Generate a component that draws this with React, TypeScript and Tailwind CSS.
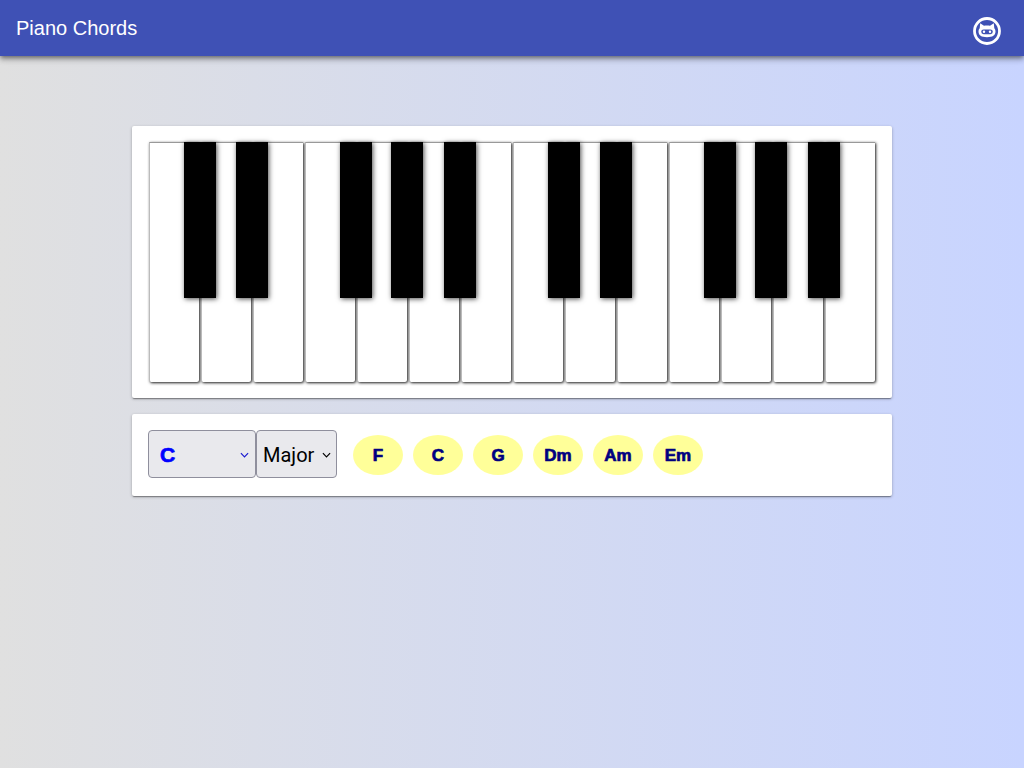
const whiteCount = Array.from({ length: 14 }, (_, i) => i);
const blackLefts = [36, 88, 192, 243, 296, 400, 452, 556, 607, 660];
const chords = ["F", "C", "G", "Dm", "Am", "Em"];

function Chevron({ className }: { className: string }) {
  return (
    <svg viewBox="0 0 10 6" className={className} fill="none" stroke="currentColor" strokeWidth="1.3">
      <path d="M1 1l4 4 4-4" />
    </svg>
  );
}

function GithubCat() {
  return (
    <svg viewBox="0 0 30 30" className="w-[30px] h-[30px] mt-[6px]">
      <circle cx="15" cy="15" r="12.500" fill="none" stroke="white" strokeWidth="2.800" />
      <path
        d="M8.200 7.200l3.800 2.600c1.900-.4 4.100-.4 6 0l3.800-2.600.5 5c.9 1 1.200 2.100 1.200 3.300 0 3.800-2.900 5.700-8.500 5.700s-8.500-1.900-8.500-5.700c0-1.200.3-2.300 1.200-3.300z"
        fill="white"
      />
      <rect x="9.200" y="13.400" width="11.600" height="4.800" rx="2.400" fill="#3f51b5" />
      <circle cx="12" cy="15.800" r="1.200" fill="white" />
      <circle cx="18" cy="15.800" r="1.200" fill="white" />
    </svg>
  );
}

export default function App() {
  return (
    <div className="min-h-[768px] flex flex-col bg-gradient-to-r from-[#e0e0e0] to-[#c8d4ff] font-['Liberation_Sans',sans-serif]">
      <header className="h-14 flex items-center justify-between pl-4 pr-[22px] bg-[#3f51b5] text-white shadow-[0_2px_4px_-1px_rgba(0,0,0,0.4),0_4px_5px_rgba(0,0,0,0.2),0_1px_10px_rgba(0,0,0,0.12)]">
        <span className="text-xl leading-none">Piano Chords</span>
        <GithubCat />
      </header>
      <main className="w-[760px] ml-[132px] mt-[70px] flex flex-col gap-4">
        <section className="bg-white p-4 rounded-[2px] shadow-[0_1px_3px_rgba(0,0,0,0.3),0_2px_1px_-1px_rgba(0,0,0,0.3)]">
          <div className="relative flex h-[240px]">
            {whiteCount.map((i) => (
              <div
                key={i}
                className="w-[50px] mr-[2px] translate-x-[1px] h-full bg-white rounded-b-[2px] border-t border-l border-t-[#999] border-l-[#bbb] shadow-[1px_1px_3px_rgba(0,0,0,0.9)]"
              />
            ))}
            {blackLefts.map((x) => (
              <div
                key={x}
                style={{ left: x }}
                className="absolute top-0 w-8 h-[156px] bg-black shadow-[1px_1px_5px_rgba(0,0,0,0.7)]"
              />
            ))}
          </div>
        </section>
        <section className="bg-white px-4 h-[82px] flex items-center rounded-[2px] shadow-[0_1px_3px_rgba(0,0,0,0.3),0_2px_1px_-1px_rgba(0,0,0,0.3)]">
          <div className="relative w-[108px] h-12 shrink-0 mb-[2px]">
            <select className="appearance-none w-full h-full pl-[11px] pt-[2px] bg-[#e9e9ed] border border-[#8f8f9d] rounded text-[21px] font-bold text-[#0000ff] [-webkit-text-stroke:0.7px_#0000ff] font-['Liberation_Sans',sans-serif]">
              <option>C</option>
            </select>
            <Chevron className="absolute right-[7px] top-[22px] w-[9px] h-[6px] text-[#1a1ad0] pointer-events-none" />
          </div>
          <div className="relative w-[81px] h-12 shrink-0 mb-[2px]">
            <select className="appearance-none w-full h-full pl-[6px] pt-[2px] bg-[#e9e9ed] border border-[#8f8f9d] rounded text-[20px] text-black font-['Roboto',sans-serif]">
              <option>Major</option>
            </select>
            <Chevron className="absolute right-[6px] top-[22px] w-[9px] h-[6px] text-black pointer-events-none" />
          </div>
          <div className="flex gap-[10px] ml-4">
            {chords.map((c) => (
              <div
                key={c}
                className="w-[50px] h-10 rounded-[50%] bg-[#ffff99] flex items-center justify-center pt-[2px] text-[#000080] font-bold text-[17px] [-webkit-text-stroke:0.7px_#000080] font-['Liberation_Sans',sans-serif]"
              >
                {c}
              </div>
            ))}
          </div>
        </section>
      </main>
    </div>
  );
}
